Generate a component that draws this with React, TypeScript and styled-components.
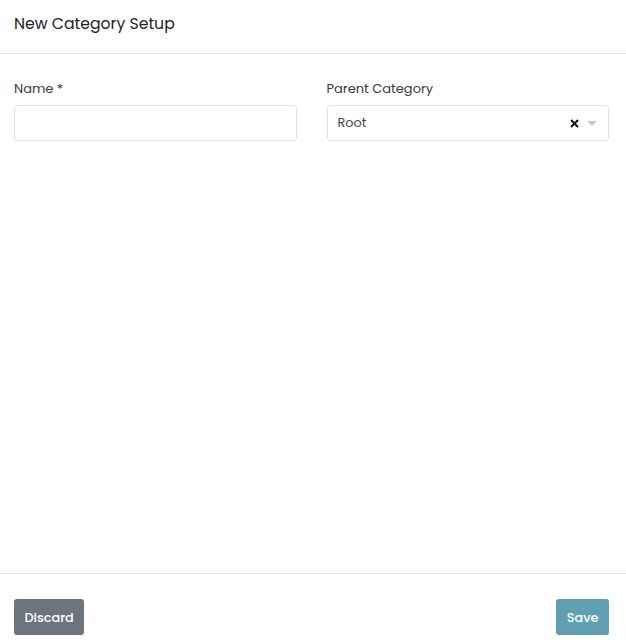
import React from "react";
import styled, { createGlobalStyle } from "styled-components";

const Global = createGlobalStyle`
  html, body { margin: 0; padding: 0; background: #fff; }
  body { font-family: Poppins, Inter, "Noto Sans", sans-serif; color: #212529; }
  * { box-sizing: border-box; }
`;

const Modal = styled.div`
  width: 626px;
  height: 640px;
  display: flex;
  flex-direction: column;
  background: #fff;
`;

const Header = styled.div`
  height: 54px;
  padding: 0 17px 6px 14px;
  display: flex;
  align-items: center;
  border-bottom: 1px solid #dee2e6;
`;

const Title = styled.h5`
  margin: 0;
  font-size: 15.7px;
  font-weight: 400;
  color: #212529;
`;

const Body = styled.div`
  flex: 1;
  padding: 26px 17px 0 14px;
`;

const Row = styled.div`
  display: grid;
  grid-template-columns: 1fr 1fr;
  column-gap: 30px;
`;

const Field = styled.div`
  display: flex;
  flex-direction: column;
`;

const Label = styled.label`
  font-size: 13px;
  color: #343a40;
  margin-bottom: 8px;
  line-height: 17px;
`;

const Input = styled.input`
  height: 36px;
  border: 1px solid #dfe2e6;
  border-radius: 4px;
  padding: 0 10px;
  font-family: inherit;
  font-size: 13px;
  outline: none;
`;

const Select = styled.div`
  height: 36px;
  border: 1px solid #dfe2e6;
  border-radius: 4px;
  padding: 0 10px;
  display: flex;
  align-items: center;
  font-size: 12.8px;
  color: #444;
`;

const SelectValue = styled.span`
  flex: 1;
`;

const Clear = styled.span`
  display: flex;
  align-items: center;
  margin-right: 8px;
`;

const Arrow = styled.span`
  width: 0;
  height: 0;
  border-left: 5px solid transparent;
  border-right: 5px solid transparent;
  border-top: 5px solid #c8c8c8;
  margin-right: 1px;
`;

const Footer = styled.div`
  height: 67px;
  border-top: 1px solid #dee2e6;
  padding: 25px 17px 0 14px;
  display: flex;
  justify-content: space-between;
  align-items: flex-start;
`;

const Button = styled.button<{ $tone: "secondary" | "primary" }>`
  height: 36px;
  padding: 1px 10.5px 0;
  border: none;
  border-radius: 3px;
  color: #fff;
  font-family: inherit;
  font-size: 12.8px;
  font-weight: 500;
  background: ${(p) => (p.$tone === "primary" ? "#609fb2" : "#6c757d")};
`;

export default function App() {
  return (
    <>
      <Global />
      <Modal>
        <Header>
          <Title>New Category Setup</Title>
        </Header>
        <Body>
          <Row>
            <Field>
              <Label>Name *</Label>
              <Input />
            </Field>
            <Field>
              <Label>Parent Category</Label>
              <Select>
                <SelectValue>Root</SelectValue>
                <Clear>
                  <svg width="9" height="9" viewBox="0 0 9 9">
                    <path d="M1 1L8 8M8 1L1 8" stroke="#111" strokeWidth="2" />
                  </svg>
                </Clear>
                <Arrow />
              </Select>
            </Field>
          </Row>
        </Body>
        <Footer>
          <Button $tone="secondary">Discard</Button>
          <Button $tone="primary">Save</Button>
        </Footer>
      </Modal>
    </>
  );
}
